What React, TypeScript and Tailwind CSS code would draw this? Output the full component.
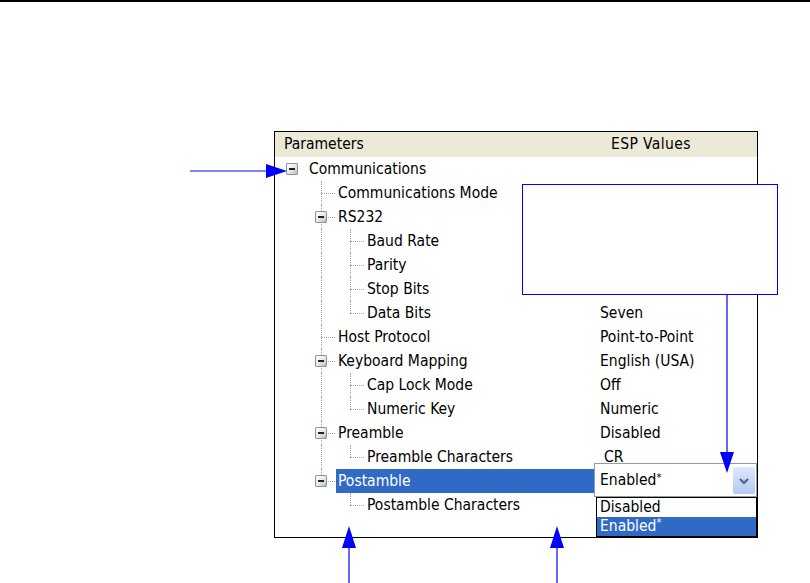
import React from 'react'

type Row = {
  label: string
  depth: number
  box?: boolean
  last?: boolean
  cont?: boolean
  value?: string
  selected?: boolean
}

const rows: Row[] = [
  { label: 'Communications', depth: 0, box: true },
  { label: 'Communications Mode', depth: 1 },
  { label: 'RS232', depth: 1, box: true },
  { label: 'Baud Rate', depth: 2, cont: true },
  { label: 'Parity', depth: 2, cont: true },
  { label: 'Stop Bits', depth: 2, cont: true },
  { label: 'Data Bits', depth: 2, cont: true, last: true, value: 'Seven' },
  { label: 'Host Protocol', depth: 1, value: 'Point-to-Point' },
  { label: 'Keyboard Mapping', depth: 1, box: true, value: 'English (USA)' },
  { label: 'Cap Lock Mode', depth: 2, cont: true, value: 'Off' },
  { label: 'Numeric Key', depth: 2, cont: true, last: true, value: 'Numeric' },
  { label: 'Preamble', depth: 1, box: true, value: 'Disabled' },
  { label: 'Preamble Characters', depth: 2, cont: true, last: true, value: 'CR' },
  { label: 'Postamble', depth: 1, box: true, last: true, selected: true },
  { label: 'Postamble Characters', depth: 2, last: true },
]

function MinusBox() {
  return (
    <div className="absolute left-[8px] top-[6px] w-[12px] h-[12px] border border-[#8196b3] rounded-[1px] bg-gradient-to-br from-white via-[#ebeae4] to-[#bfbcb2] flex items-center justify-center z-10">
      <div className="w-[6px] h-[2px] bg-[#222]" />
    </div>
  )
}

function Star() {
  return <span className="text-[11px] relative -top-[4px]">*</span>
}

function TreeRow({ row }: { row: Row }) {
  const cells = []
  for (let k = 0; k <= row.depth; k++) {
    if (k < row.depth) {
      cells.push(
        <div key={k} className="relative w-[29px] h-full shrink-0">
          {k === 1 && row.cont && (
            <div className="absolute left-[14px] top-0 bottom-0 border-l border-dotted border-[#a6a6a6]" />
          )}
        </div>
      )
    } else {
      cells.push(
        <div key={k} className="relative w-[29px] h-full shrink-0">
          {row.depth > 0 && (
            <>
              <div className={`absolute left-[14px] top-0 border-l border-dotted border-[#a6a6a6] ${row.last ? 'h-[12px]' : 'bottom-0'}`} />
              <div className="absolute left-[14px] right-[1px] top-[12px] border-t border-dotted border-[#a6a6a6]" />
            </>
          )}
          {row.box && <MinusBox />}
        </div>
      )
    }
  }

  return (
    <div className="flex h-[24px]">
      <div className="flex w-[319px] pl-[3px] shrink-0">
        {cells}
        {row.selected ? (
          <div className="flex-1 flex items-center bg-[#316ac5] text-white pl-[2px] pt-[2px]">{row.label}</div>
        ) : (
          <div className="flex items-center pl-[2px] pt-[2px] whitespace-nowrap">{row.label}</div>
        )}
      </div>
      <div className="relative flex-1 flex items-center pt-[2px]">
        {row.value && (
          <span className={row.value === 'CR' ? 'pl-[10px]' : 'pl-[6px]'}>{row.value}</span>
        )}
        {row.selected && (
          <>
            <div className="absolute left-0 right-0 -top-[6px] h-[34px] border border-[#8b9cb3] bg-white flex items-center z-10">
              <span className="pl-[5px] pt-[2px]">Enabled<Star /></span>
              <div className="absolute right-[1px] top-[3px] bottom-[2px] w-[22px] rounded-[2px] bg-gradient-to-b from-[#dce8fe] to-[#b3c9f5] flex items-center justify-center">
                <svg width="12" height="8" viewBox="0 0 12 8">
                  <path d="M2 2 L6 6 L10 2" fill="none" stroke="#4d6185" strokeWidth="2" />
                </svg>
              </div>
            </div>
            <div className="absolute left-[2px] right-0 top-[28px] h-[40px] border border-black bg-white z-10 flex flex-col">
              <div className="h-[19px] flex items-center pl-[3px] pt-[1px]">Disabled</div>
              <div className="h-[19px] flex items-center pl-[3px] pt-[1px] bg-[#316ac5] text-white">Enabled<Star /></div>
            </div>
          </>
        )}
      </div>
    </div>
  )
}

export default function App() {
  return (
    <div
      className="relative w-[810px] h-[583px] bg-white overflow-hidden text-black text-[15.5px]"
      style={{ fontFamily: '"DejaVu Sans Condensed", "Liberation Sans", sans-serif' }}
    >
      <div className="border-t-2 border-black" />

      <div className="ml-[274px] mt-[129px] w-[484px] h-[407px] border border-black flex flex-col">
        <div className="flex h-[25px] bg-[#ece9d8] items-center shrink-0 pt-[1px]">
          <div className="w-[319px] pl-[9px]">Parameters</div>
          <div className="pl-[17px] tracking-[0.4px]">ESP Values</div>
        </div>
        {rows.map(r => (
          <TreeRow key={r.label} row={r} />
        ))}
      </div>

      <div className="absolute left-[522px] top-[184px] w-[256px] h-[111px] border border-[#0000ff] bg-white z-20" />

      <svg className="absolute inset-0 z-30 pointer-events-none" width="810" height="583" viewBox="0 0 810 583">
        <line x1="190" y1="171" x2="270" y2="171" stroke="#0000ff" strokeWidth="1.2" />
        <polygon points="266,164 287,171 266,178" fill="#0000ff" />
        <line x1="727" y1="295" x2="727" y2="455" stroke="#0000ff" strokeWidth="1.2" />
        <polygon points="720,452 734,452 727,473" fill="#0000ff" />
        <line x1="349" y1="546" x2="349" y2="583" stroke="#0000ff" strokeWidth="1.2" />
        <polygon points="342,548 356,548 349,526" fill="#0000ff" />
        <line x1="557" y1="546" x2="557" y2="583" stroke="#0000ff" strokeWidth="1.2" />
        <polygon points="550,548 564,548 557,526" fill="#0000ff" />
      </svg>
    </div>
  )
}
